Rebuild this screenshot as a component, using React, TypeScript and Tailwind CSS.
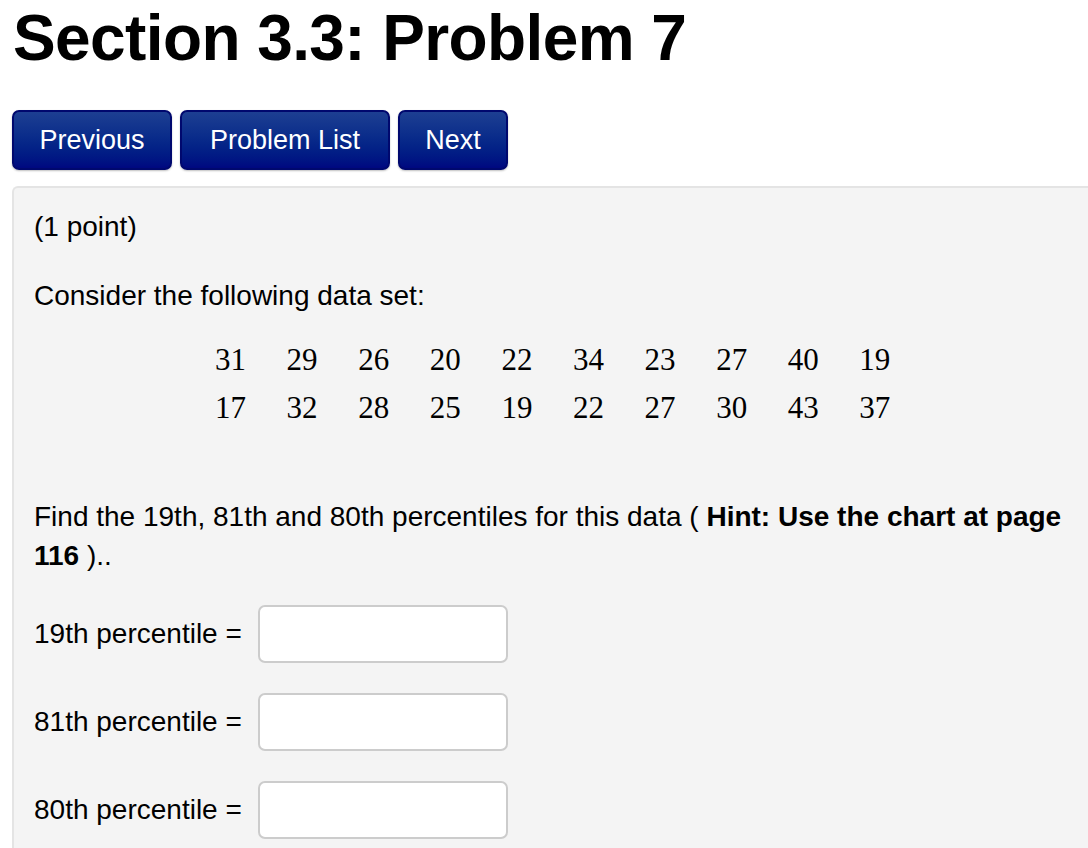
const ROWS = [
  [31, 29, 26, 20, 22, 34, 23, 27, 40, 19],
  [17, 32, 28, 25, 19, 22, 27, 30, 43, 37],
];

const FIELDS = ["19th percentile =", "81th percentile =", "80th percentile ="];

function NavButton({ label, width }: { label: string; width: string }) {
  return (
    <button
      className={`h-[60px] ${width} rounded-[7px] border-2 border-[#00086e] bg-linear-to-b from-[#1d3f92] to-[#000780] text-[27px] text-white shadow-[0_1px_2px_rgba(0,0,0,0.25)]`}
    >
      {label}
    </button>
  );
}

export default function App() {
  return (
    <div className="min-h-screen overflow-hidden bg-white font-['Liberation_Sans',Arial,sans-serif] text-black">
      <h1 className="pl-[13px] pt-[6px] text-[64px] font-bold leading-[64px] tracking-[-0.6px]">
        Section 3.3: Problem 7
      </h1>

      {/* Nav */}
      <div className="ml-[12px] mt-[40px] flex gap-[8px]">
        <NavButton label="Previous" width="w-[160px]" />
        <NavButton label="Problem List" width="w-[210px]" />
        <NavButton label="Next" width="w-[110px]" />
      </div>

      {/* Problem body */}
      <div className="ml-[12px] mt-[16px] w-[1100px] rounded-tl-[6px] border-2 border-r-0 border-[#e4e4e4] bg-[#f4f4f4] pb-[40px] pl-[20px] pt-[19px] text-[28px] leading-[40px]">
        <p>(1 point)</p>
        <p className="mt-[29px]">Consider the following data set:</p>

        <table className="ml-[181px] mt-[20px] font-['Liberation_Serif','Times_New_Roman',serif] text-[31px]">
          <tbody>
            {ROWS.map((row, i) => (
              <tr key={i} className="h-[48px]">
                {row.map((n, j) => (
                  <td key={j} className="w-[71.6px] p-0 text-left align-middle">
                    {n}
                  </td>
                ))}
              </tr>
            ))}
          </tbody>
        </table>

        <p className="mt-[65px] leading-[39px]">
          Find the 19th, 81th and 80th percentiles for this data ({" "}
          <b>Hint: Use the chart at page</b>
          <br />
          <b>116</b> )..
        </p>

        <div className="mt-[30px] flex flex-col gap-[30px]">
          {FIELDS.map((f) => (
            <div key={f} className="flex items-center gap-[16px]">
              <span>{f}</span>
              <input
                type="text"
                className="h-[58px] w-[250px] rounded-[7px] border-2 border-[#cccccc] bg-white px-3 text-[26px] outline-none"
              />
            </div>
          ))}
        </div>
      </div>
    </div>
  );
}
